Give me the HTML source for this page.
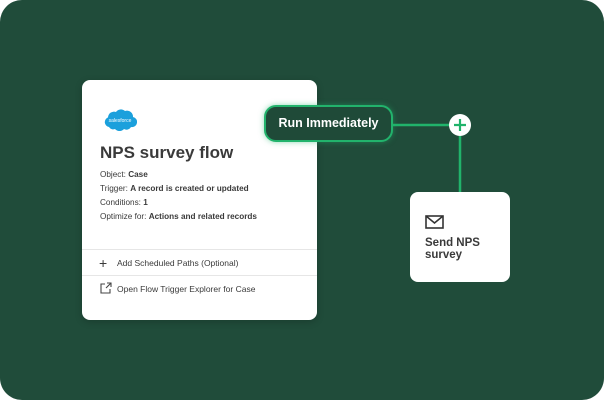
<!DOCTYPE html><html><head><style>
body{margin:0;background:#fff;width:604px;height:400px;overflow:hidden;font-family:"Liberation Sans",sans-serif}
.bg{position:absolute;left:0;top:0;width:604px;height:400px;background:#204c3a;border-radius:22px}
.card{position:absolute;left:82px;top:80px;width:235px;height:240px;background:#fff;border-radius:8px;box-shadow:0 2px 8px rgba(0,0,0,.2)}
.t{position:absolute;color:#3a3a3a}
.hr{position:absolute;left:0;width:235px;height:1px;background:#e6e6e6}
</style></head><body>
<div class="bg"></div>
<div class="card">
<svg style="position:absolute;left:21px;top:27px" width="34" height="24" viewBox="0 0 34 24"><path d="M6 20a5 5 0 0 1-1-9.6A6 6 0 0 1 13 5a6 6 0 0 1 9-1a6 6 0 0 1 8 6a5 5 0 0 1-2 10a5 5 0 0 1-7 2a6 6 0 0 1-9 0a5 5 0 0 1-6-2z" fill="#1ba0dc"/><text x="17" y="15" font-size="5" fill="#fff" text-anchor="middle" font-family="Liberation Sans">salesforce</text></svg>
<div class="t" style="left:18px;top:63px;font-size:17px;font-weight:bold">NPS survey flow</div>
<div class="t" style="left:18px;top:88px;font-size:8.2px;line-height:14px">Object: <b>Case</b><br>Trigger: <b>A record is created or updated</b><br>Conditions: <b>1</b><br>Optimize for: <b>Actions and related records</b></div>
<div class="hr" style="top:169px"></div>
<div class="t" style="left:17px;top:175px;font-size:14px;font-weight:300">+</div>
<div class="t" style="left:35px;top:178px;font-size:8.5px">Add Scheduled Paths (Optional)</div>
<div class="hr" style="top:195px"></div>
<svg style="position:absolute;left:18px;top:202px" width="12" height="12" viewBox="0 0 12 12" fill="none" stroke="#444" stroke-width="1.1"><path d="M5 2H1v9h9V7M6 6l5-5M7 1h4v4"/></svg>
<div class="t" style="left:35px;top:204px;font-size:8.5px">Open Flow Trigger Explorer for Case</div>
</div>
<svg style="position:absolute;left:0;top:0" width="604" height="400">
<line x1="392" y1="125" x2="450" y2="125" stroke="#21b36b" stroke-width="2.5"/>
<line x1="460" y1="136" x2="460" y2="193" stroke="#21b36b" stroke-width="2.5"/>
<circle cx="460" cy="125" r="11" fill="#fff"/>
<path d="M460 119v12M454 125h12" stroke="#21b36b" stroke-width="2.2"/>
</svg>
<div style="position:absolute;left:264px;top:105px;width:125px;height:33px;border:2.5px solid #22b36c;border-radius:12px;background:#1f4a38;color:#fff;font-size:12.5px;font-weight:bold;line-height:33px;text-align:center;box-shadow:0 0 6px rgba(34,179,108,.5)">Run Immediately</div>
<div style="position:absolute;left:410px;top:192px;width:100px;height:90px;background:#fff;border-radius:8px">
<svg style="position:absolute;left:15px;top:23px" width="20" height="15" viewBox="0 0 20 15" fill="none" stroke="#333" stroke-width="1.6"><rect x="1" y="1" width="17" height="12"/><path d="M1 1l8.5 7L18 1"/></svg>
<div style="position:absolute;left:15px;top:45px;font-size:11.5px;font-weight:bold;color:#3a3a3a;line-height:12px">Send NPS<br>survey</div>
</div>
</body></html>
